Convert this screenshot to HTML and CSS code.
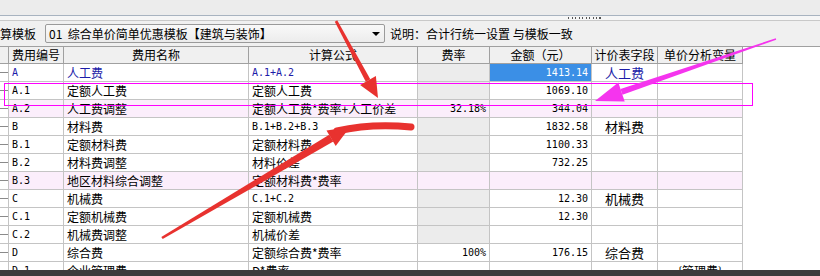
FILE: index.html
```html
<!DOCTYPE html>
<html lang="zh">

<head>
    <meta charset="UTF-8">
    <title>单价取费</title>
    <link rel="stylesheet" href="styles.css">
</head>

<body>
    <div class="top"></div>
    <div class="split"><span class="grip"></span></div>

    <div class="toolbar">
        <span class="label">算模板</span>
        <div class="combo">
            <span>01&nbsp;&nbsp;综合单价简单优惠模板【建筑与装饰】</span>
            <span class="arrow"></span>
        </div>
        <span class="note">说明：合计行统一设置 与模板一致</span>
    </div>

    <div class="grid-wrap">
        <div class="row head">
            <div class="c ind"></div>
            <div class="c">费用编号</div>
            <div class="c">费用名称</div>
            <div class="c">计算公式</div>
            <div class="c">费率</div>
            <div class="c">金额（元）</div>
            <div class="c">计价表字段</div>
            <div class="c">单价分析变量</div>
        </div>

        <div class="row blue">
            <div class="c ind"></div>
            <div class="c en">A</div>
            <div class="c">人工费</div>
            <div class="c en">A.1+A.2</div>
            <div class="c rate off"></div>
            <div class="c en amt sel">1413.14</div>
            <div class="c field">人工费</div>
            <div class="c"></div>
        </div>
        <div class="row">
            <div class="c ind"></div>
            <div class="c en">A.1</div>
            <div class="c">定额人工费</div>
            <div class="c">定额人工费</div>
            <div class="c rate off"></div>
            <div class="c en amt">1069.10</div>
            <div class="c field"></div>
            <div class="c"></div>
        </div>
        <div class="row pink">
            <div class="c ind"></div>
            <div class="c en">A.2</div>
            <div class="c">人工费调整</div>
            <div class="c">定额人工费*费率+人工价差</div>
            <div class="c en rate">32.18%</div>
            <div class="c en amt">344.04</div>
            <div class="c field"></div>
            <div class="c"></div>
        </div>
        <div class="row">
            <div class="c ind"></div>
            <div class="c en">B</div>
            <div class="c">材料费</div>
            <div class="c en">B.1+B.2+B.3</div>
            <div class="c rate off"></div>
            <div class="c en amt">1832.58</div>
            <div class="c field">材料费</div>
            <div class="c"></div>
        </div>
        <div class="row">
            <div class="c ind"></div>
            <div class="c en">B.1</div>
            <div class="c">定额材料费</div>
            <div class="c">定额材料费</div>
            <div class="c rate off"></div>
            <div class="c en amt">1100.33</div>
            <div class="c field"></div>
            <div class="c"></div>
        </div>
        <div class="row">
            <div class="c ind"></div>
            <div class="c en">B.2</div>
            <div class="c">材料费调整</div>
            <div class="c">材料价差</div>
            <div class="c rate off"></div>
            <div class="c en amt">732.25</div>
            <div class="c field"></div>
            <div class="c"></div>
        </div>
        <div class="row pink">
            <div class="c ind"></div>
            <div class="c en">B.3</div>
            <div class="c">地区材料综合调整</div>
            <div class="c">定额材料费*费率</div>
            <div class="c rate"></div>
            <div class="c en amt"></div>
            <div class="c field"></div>
            <div class="c"></div>
        </div>
        <div class="row">
            <div class="c ind"></div>
            <div class="c en">C</div>
            <div class="c">机械费</div>
            <div class="c en">C.1+C.2</div>
            <div class="c rate off"></div>
            <div class="c en amt">12.30</div>
            <div class="c field">机械费</div>
            <div class="c"></div>
        </div>
        <div class="row">
            <div class="c ind"></div>
            <div class="c en">C.1</div>
            <div class="c">定额机械费</div>
            <div class="c">定额机械费</div>
            <div class="c rate off"></div>
            <div class="c en amt">12.30</div>
            <div class="c field"></div>
            <div class="c"></div>
        </div>
        <div class="row">
            <div class="c ind"></div>
            <div class="c en">C.2</div>
            <div class="c">机械费调整</div>
            <div class="c">机械价差</div>
            <div class="c rate off"></div>
            <div class="c en amt"></div>
            <div class="c field"></div>
            <div class="c"></div>
        </div>
        <div class="row">
            <div class="c ind"></div>
            <div class="c en">D</div>
            <div class="c">综合费</div>
            <div class="c">定额综合费*费率</div>
            <div class="c en rate">100%</div>
            <div class="c en amt">176.15</div>
            <div class="c field">综合费</div>
            <div class="c"></div>
        </div>
        <div class="row">
            <div class="c ind"></div>
            <div class="c en">D.1</div>
            <div class="c">企业管理费</div>
            <div class="c">D*费率</div>
            <div class="c rate"></div>
            <div class="c en amt"></div>
            <div class="c field"></div>
            <div class="c var">{管理费}</div>
        </div>
    </div>

    <div class="taskbar"></div>

    <!-- 标注：箭头和框 -->
    <svg class="marks" width="820" height="276" viewBox="0 0 820 276">
        <rect x="4.5" y="83.5" width="748" height="22" fill="none" stroke="#ff00ff" stroke-width="1" />
        <g fill="#e8322f">
            <polygon points="334.8,21.8 337.2,20.2 370.3,79.2 365.8,81.8" />
            <polygon points="378,98 360.1,84.9 375.9,76.1" />
            <polygon points="161.3,236.9 162.7,239.1 333.3,141.6 329.2,134.8" />
            <polygon points="350,127 326.5,130.5 335.7,145.9" />
        </g>
        <path d="M337 131 Q372 123 411 127" fill="none" stroke="#e8322f" stroke-width="7" stroke-linecap="round" />
        <g fill="#f534ee">
            <polygon points="775.8,38.3 776.2,39.7 622.5,94.7 620.5,89.1" />
            <polygon points="595,101 618.3,82.4 624.7,101.4" />
        </g>
    </svg>
</body>

</html>
```

FILE: styles.css
```css
body {
    margin: 0;
    width: 820px;
    height: 276px;
    overflow: hidden;
    position: relative;
    font-family: "Noto Sans CJK SC", sans-serif;
    font-size: 12px;
    color: #000;
    background-color: #fff;
}

.top {
    height: 15px;
    background-color: #ececec;
}

.split {
    border-top: 1px solid #a8b3c0;
    border-bottom: 1px solid #c9c9c9;
    box-sizing: border-box;
    height: 6px;
    background-color: #f6f6f6;
    display: flex;
    align-items: center;
}

.grip {
    margin-left: 568px;
    width: 33px;
    height: 2px;
    background: repeating-linear-gradient(to right, #555 0 1px, transparent 1px 3.5px);
}

.toolbar {
    height: 25px;
    background-color: #f0f0f0;
    display: flex;
    align-items: center;
    white-space: nowrap;
}

.label {
    width: 45px;
}

.combo {
    width: 340px;
    height: 19px;
    box-sizing: border-box;
    border: 1px solid #9a9a9a;
    border-radius: 2px;
    background: linear-gradient(#f9f9f9, #ececec);
    display: flex;
    align-items: center;
    justify-content: space-between;
    padding: 0 4px 0 3px;
    line-height: 17px;
}

.arrow {
    width: 0;
    height: 0;
    border-left: 4px solid transparent;
    border-right: 4px solid transparent;
    border-top: 4px solid #000;
}

.note {
    margin-left: 5px;
}

.grid-wrap {
    height: 224px;
    overflow: hidden;
    border-top: 1px solid #a0a0a0;
    box-sizing: border-box;
    background-color: #fff;
}

.row {
    display: grid;
    grid-template-columns: 9px 55px 185px 169px 72px 102px 66px 85px;
    width: 743px;
    height: 18px;
}

.c {
    height: 18px;
    box-sizing: border-box;
    border-right: 1px solid #c4c4c4;
    border-bottom: 1px solid #c4c4c4;
    padding: 0 3px;
    line-height: 17px;
    white-space: nowrap;
    overflow: hidden;
}

.head {
    height: 17px;
}

.head .c {
    height: 17px;
    line-height: 16px;
    text-align: center;
    background-color: #f0f0f0;
    border-color: #a0a0a0;
    padding: 0;
}

.ind {
    padding: 0;
    background: linear-gradient(#8a8a8a, #8a8a8a) no-repeat 0 50% / 9px 1px;
}

.head .ind {
    background: #f0f0f0;
}

.en {
    font-family: "DejaVu Sans Mono", monospace;
    font-size: 10px;
}

.rate,
.amt {
    text-align: right;
}

.off {
    background-color: #ececec;
}

.sel {
    background-color: #3b8fe6;
    color: #fff;
}

.field {
    text-align: center;
    font-size: 13px;
}

.var {
    text-align: center;
}

.blue .c {
    color: #1c1ca8;
}

.blue .sel {
    color: #fff;
}

.pink .c {
    background-color: #fbeefb;
}

.pink .ind {
    background: linear-gradient(#8a8a8a, #8a8a8a) no-repeat 0 50% / 9px 1px, #fff;
}

.taskbar {
    height: 6px;
    background-color: #3b3b3b;
}

.marks {
    position: absolute;
    top: 0;
    left: 0;
    pointer-events: none;
}
```
